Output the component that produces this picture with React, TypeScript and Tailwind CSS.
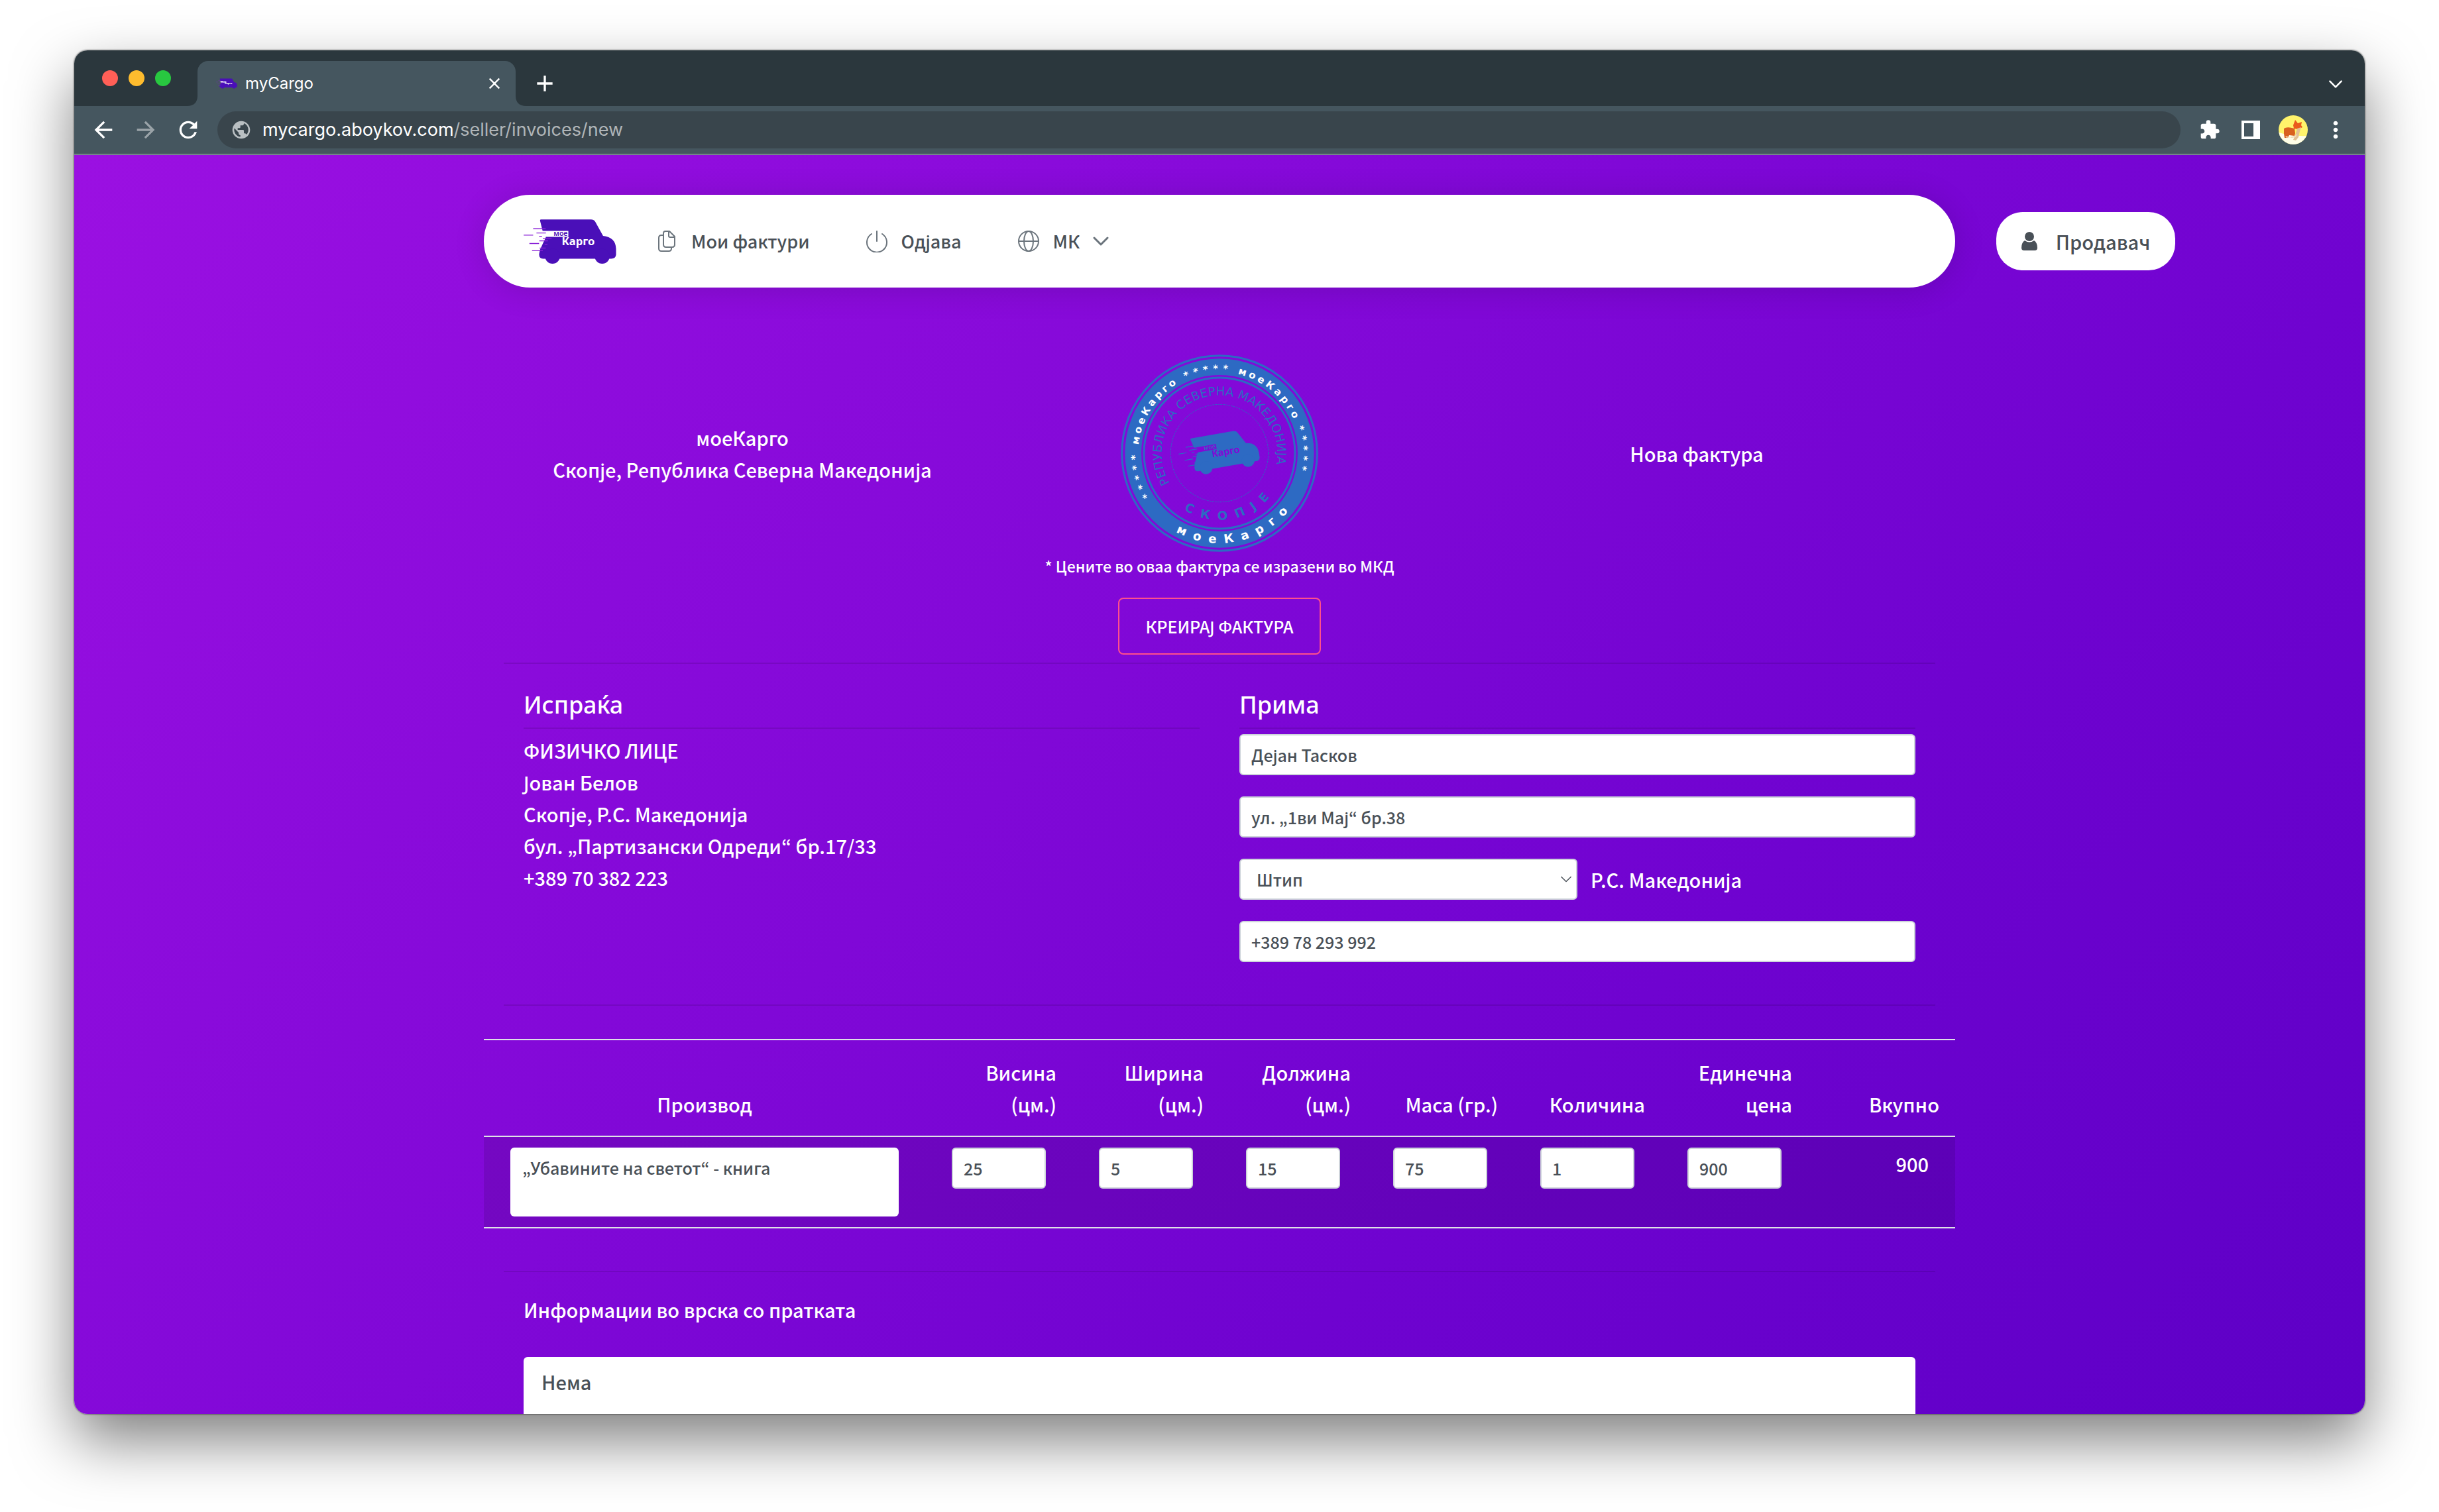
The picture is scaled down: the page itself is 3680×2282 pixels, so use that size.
import React from "react";
import { MdAdd, MdArrowBack, MdArrowForward, MdClose, MdExtension, MdMoreVert, MdPublic, MdRefresh } from "react-icons/md";

type TruckProps = { body: string; band: string; word: string; lines: string };

function TruckShape({ body, band, word, lines }: TruckProps) {
  return (
    <g>
      <g fill={body}>
        <path d="M108 72H336Q350 72 356 83L391 146Q448 152 450 205V232Q448 250 428 250H118Q100 250 100 230L104 210L131 152L116 124L105 80Q103 72 108 72Z" />
        <circle cx="161" cy="239" r="34" />
        <circle cx="387" cy="239" r="34" />
      </g>
      <path d="M114 124H233V151H122Z" fill={band} />
      <g stroke={lines} strokeWidth="4">
        <path d="M73 114H130M88 133H131M30 143H73M100 148H113M117 159H157M101 169H140M56 181H100M125 185H138M102 202H130M68 214H117" />
      </g>
      <text x="166" y="146" fontSize="32" fontWeight="600" fill={body} fontFamily="Noto Sans, sans-serif">мое</text>
      <text x="203" y="190" fontSize="50" fontWeight="700" fill={word} fontFamily="Noto Sans, sans-serif">Карго</text>
    </g>
  );
}

function Logo({ className }: { className: string }) {
  return (
    <svg viewBox="30 68 424 208" className={className} role="img" aria-label="моеКарго">
      <TruckShape body="#4a0fb8" band="#ffffff" word="#ffffff" lines="#8a22d8" />
    </svg>
  );
}

const BLUE = "#2d6ac3";

type ArcProps = { path: string; angle: number; size: number; weight: number; fill: string; spacing?: number; children: string };

function ArcText({ path, angle, size, weight, fill, spacing, children }: ArcProps) {
  return (
    <text fontSize={size} fontWeight={weight} fill={fill} letterSpacing={spacing} textAnchor="middle" fontFamily="DejaVu Sans, sans-serif">
      <textPath href={`#${path}`} startOffset={`${((180 + angle) / 360) * 100}%`}>{children}</textPath>
    </text>
  );
}

function Stamp() {
  return (
    <svg viewBox="0 0 900 900" className="size-[300px]" role="img" aria-label="Печат моеКарго">
      <defs>
        <path id="band-top" d="M450 818A368 368 0 0 1 450 82A368 368 0 0 1 450 818" />
        <path id="band-bottom" d="M450 43A407 407 0 0 0 450 857A407 407 0 0 0 450 43" />
        <path id="inner-top" d="M450 712A262 262 0 0 1 450 188A262 262 0 0 1 450 712" />
        <path id="inner-bottom" d="M450 148A302 302 0 0 0 450 752A302 302 0 0 0 450 148" />
      </defs>
      <g fill="none" stroke={BLUE}>
        <circle cx="450" cy="450" r="442" strokeWidth="9" />
        <circle cx="450" cy="450" r="391" strokeWidth="74" />
        <circle cx="450" cy="450" r="342" strokeWidth="9" />
        <circle cx="450" cy="450" r="221" strokeWidth="3" strokeDasharray="8 4" />
      </g>
      <ArcText path="band-top" angle={-105} size={45} weight={700} fill="#fff" spacing={20}>*****</ArcText>
      <ArcText path="band-top" angle={-57} size={45} weight={700} fill="#fff" spacing={12}>моеКарго</ArcText>
      <ArcText path="band-top" angle={-8} size={45} weight={700} fill="#fff" spacing={20}>*****</ArcText>
      <ArcText path="band-top" angle={40} size={45} weight={700} fill="#fff" spacing={12}>моеКарго</ArcText>
      <ArcText path="band-top" angle={88} size={45} weight={700} fill="#fff" spacing={20}>*****</ArcText>
      <ArcText path="band-bottom" angle={13} size={55} weight={700} fill="#fff" spacing={36}>моеКарго</ArcText>
      <ArcText path="inner-top" angle={-10} size={55} weight={400} fill={BLUE}>РЕПУБЛИКА СЕВЕРНА МАКЕДОНИЈА</ArcText>
      <ArcText path="inner-bottom" angle={12} size={55} weight={700} fill={BLUE} spacing={38}>СКОПЈЕ</ArcText>
      <g transform="translate(219 338) rotate(-9.8) scale(0.855)">
        <TruckShape body={BLUE} band="#8208d6" word="#8208d6" lines={BLUE} />
      </g>
    </svg>
  );
}

function FilesIcon() {
  return (
    <svg viewBox="0 0 26 34" className="h-[34px] w-[26px]" fill="none" stroke="#6c757d" strokeWidth="2" strokeLinejoin="round">
      <path d="M11 2H17L25 10V22Q25 26 21 26H12Q8 26 8 22V5Q8 2 11 2Z" />
      <path d="M16 2V9Q16 11 18 11H25M8 8H5Q1 8 1 12V28Q1 32 5 32H16Q20 32 20 28V26" />
    </svg>
  );
}

function PowerIcon() {
  return (
    <svg viewBox="0 0 34 34" className="size-[34px]" fill="none" stroke="#6c757d" strokeWidth="2" strokeLinecap="round">
      <path d="M17 2V17M9 6A15 15 0 1 0 25 6" />
    </svg>
  );
}

function GlobeIcon() {
  return (
    <svg viewBox="0 0 34 34" className="size-[34px]" fill="none" stroke="#6c757d" strokeWidth="2">
      <circle cx="17" cy="17" r="15" />
      <ellipse cx="17" cy="17" rx="7" ry="15" />
      <path d="M2 17H32" />
    </svg>
  );
}

function PersonIcon() {
  return (
    <svg viewBox="0 0 24 28" className="h-[28px] w-[24px]" fill="#495057">
      <ellipse cx="12" cy="7" rx="7" ry="7" />
      <path d="M5 13Q12 18 19 13Q24 16 24 24Q24 28 20 28H4Q0 28 0 24Q0 16 5 13Z" />
    </svg>
  );
}

function Avatar() {
  return (
    <svg viewBox="0 0 44 44" className="size-11 rounded-full">
      <rect width="44" height="44" fill="#fff36b" />
      <path d="M0 26Q20 32 44 31V44H0Z" fill="#fffde8" />
      <path d="M8 20Q12 17 20 19L24 20L25 27L24 31L16 30L14 34H9L8 28Z" fill="#d9601f" />
      <path d="M22 15L25 7L29 12L35 10L34 15L36 18L30 21L23 20Z" fill="#ea5a1c" />
      <path d="M28 20L34 18L32 24L30 33L26 38L22 37L25 30Z" fill="#e3c093" />
      <path d="M10 31L12 34L22 32L28 28L26 33L20 34Z" fill="#efd9b5" />
    </svg>
  );
}

function Chevron({ className }: { className: string }) {
  return (
    <svg viewBox="0 0 24 14" className={className} fill="none" stroke="currentColor" strokeLinecap="round" strokeLinejoin="round">
      <path d="M2 2L12 12L22 2" />
    </svg>
  );
}

function BrowserChrome() {
  return (
    <header className="shrink-0 font-['Inter',sans-serif] text-white">
      <div className="flex h-21 items-end bg-[#2b373d] pr-8">
        <div className="flex h-21 w-[186px] items-center gap-4 pl-[42px]">
          <button aria-label="Затвори прозорец" className="size-6 rounded-full bg-[#ff5f57]" />
          <button aria-label="Минимизирај" className="size-6 rounded-full bg-[#febc2e]" />
          <button aria-label="Зголеми" className="size-6 rounded-full bg-[#28c840]" />
        </div>
        <div className="relative flex h-[68px] w-[480px] items-center rounded-t-2xl bg-[#45565f] pr-[18px] pl-7">
          <svg viewBox="0 0 16 16" className="absolute bottom-0 -left-4 size-4" fill="#45565f"><path d="M16 0V16H0Q16 16 16 0Z" /></svg>
          <svg viewBox="0 0 16 16" className="absolute -right-4 bottom-0 size-4" fill="#45565f"><path d="M0 0V16H16Q0 16 0 0Z" /></svg>
          <Logo className="h-4 w-8" />
          <span className="ml-3 flex-1 text-[24px]">myCargo</span>
          <button aria-label="Затвори картичка"><MdClose className="size-7" /></button>
        </div>
        <button aria-label="Нова картичка" className="ml-6 flex h-[68px] items-center"><MdAdd className="size-10" /></button>
        <button aria-label="Картички" className="mb-[27px] ml-auto"><Chevron className="h-3 w-6 stroke-3" /></button>
      </div>
      <div className="flex h-[74px] items-center border-b-2 border-[#74848a] bg-[#45565f] pr-6">
        <div className="flex w-[216px] items-center gap-6 pl-6">
          <button aria-label="Назад"><MdArrowBack className="size-10" /></button>
          <button aria-label="Напред" className="text-[#9aa3a8]"><MdArrowForward className="size-10" /></button>
          <button aria-label="Освежи"><MdRefresh className="size-10" /></button>
        </div>
        <div className="flex h-14 flex-1 items-center gap-4 rounded-full bg-[#39454c] pl-5 text-[27px]">
          <MdPublic className="size-8 text-[#b9bfc2]" />
          <span>mycargo.aboykov.com<span className="text-[#b0b5b8]">/seller/invoices/new</span></span>
        </div>
        <div className="ml-7 flex items-center">
          <button aria-label="Додатоци"><MdExtension className="size-8" /></button>
          <button aria-label="Странична лента" className="ml-8">
            <span className="block h-7 w-7 border-4 border-r-10 border-white" />
          </button>
          <button aria-label="Профил" className="ml-7"><Avatar /></button>
          <button aria-label="Мени" className="ml-[22px]"><MdMoreVert className="size-10" /></button>
        </div>
      </div>
    </header>
  );
}

function NavBar() {
  return (
    <div className="mt-15 grid grid-cols-[minmax(0,1fr)_minmax(0,2220px)_minmax(0,1fr)] items-center text-[#495057]">
      <nav className="col-start-2 flex h-[140px] items-center rounded-full bg-white pl-15 text-[27px] shadow-[0_4px_48px_rgba(0,0,0,0.14)]">
        <a href="#home"><Logo className="h-[69px] w-[141px]" /></a>
        <a href="#invoices" className="ml-[62px] flex items-center gap-6"><FilesIcon />Мои фактури</a>
        <a href="#logout" className="ml-[84px] flex items-center gap-5"><PowerIcon />Одјава</a>
        <button className="ml-[84px] flex items-center gap-5"><GlobeIcon />МК<Chevron className="h-[14px] w-6 stroke-3 text-[#6c757d]" /></button>
      </nav>
      <a href="#seller" className="ml-[62px] flex h-22 w-[270px] items-center justify-center gap-7 rounded-[40px] bg-white">
        <PersonIcon />Продавач
      </a>
    </div>
  );
}

const FIELD = "h-[62px] rounded-md border-2 border-[#ced4da] bg-white pl-4 text-[25px] text-[#495057]";
const HEADING = "mt-[38px] font-['Noto_Sans',sans-serif] text-[36px]";

function Parties() {
  return (
    <div className="mx-[30px] grid grid-cols-2 gap-15 px-[30px]">
      <section>
        <h2 className={HEADING}>Испраќа</h2>
        <hr className="mt-[10px] border-t-2 border-black/10" />
        <address className="mt-2 not-italic">
          <p>ФИЗИЧКО ЛИЦЕ</p>
          <p>Јован Белов</p>
          <p>Скопје, Р.С. Македонија</p>
          <p>бул. „Партизански Одреди“ бр.17/33</p>
          <p>+389 70 382 223</p>
        </address>
      </section>
      <section>
        <h2 className={HEADING}>Прима</h2>
        <hr className="mt-[10px] border-t-2 border-black/10" />
        <div className="mt-2 flex flex-col gap-8">
          <input aria-label="Име и презиме" defaultValue="Дејан Тасков" className={FIELD} />
          <input aria-label="Адреса" defaultValue="ул. „1ви Мај“ бр.38" className={FIELD} />
          <div className="flex items-center gap-5">
            <div className="relative w-1/2">
              <select aria-label="Град" className="block h-[62px] w-full appearance-none rounded-md border-2 border-[#ced4da] bg-white pl-6 text-[25px] text-[#495057]">
                <option>Штип</option>
              </select>
              <Chevron className="pointer-events-none absolute top-[26px] right-2 h-[10px] w-[18px] stroke-2 text-[#495057]" />
            </div>
            <span>Р.С. Македонија</span>
          </div>
          <input aria-label="Телефон" defaultValue="+389 78 293 992" className={FIELD} />
        </div>
      </section>
    </div>
  );
}

const COLUMNS = [
  { head: "Висина (цм.)", value: "25" },
  { head: "Ширина (цм.)", value: "5" },
  { head: "Должина (цм.)", value: "15" },
  { head: "Маса (гр.)", value: "75" },
  { head: "Количина", value: "1" },
  { head: "Единечна цена", value: "900" },
];

function ItemsTable() {
  return (
    <table className="mt-[50px] w-full table-fixed border-collapse">
      <thead>
        <tr className="border-y-2 border-[#dee2e6] align-bottom">
          <th className="w-[30%] p-6 font-medium">Производ</th>
          {COLUMNS.map((c) => (
            <th key={c.head} className="w-[10%] py-6 pr-6 pl-12 text-right font-medium [&:nth-child(5)]:pl-0 [&:nth-child(6)]:pl-0">{c.head}</th>
          ))}
          <th className="w-[10%] py-6 pr-6 text-right font-medium">Вкупно</th>
        </tr>
      </thead>
      <tbody>
        <tr className="border-b-2 border-[#dee2e6] bg-black/10 align-top">
          <td className="px-10 py-4">
            <textarea aria-label="Производ" defaultValue="„Убавините на светот“ - книга" className="block h-[104px] w-full resize-none rounded-md bg-white px-[18px] py-[6px] text-[25px] text-[#495057]" />
          </td>
          {COLUMNS.map((c) => (
            <td key={c.head} className="px-10 py-4">
              <input aria-label={c.head} defaultValue={c.value} className="block h-[62px] w-full rounded-md border-2 border-[#ced4da] bg-white pl-4 text-[25px] text-[#495057]" />
            </td>
          ))}
          <td className="px-10 py-4 text-right">900</td>
        </tr>
      </tbody>
    </table>
  );
}

export default function App() {
  return (
    <div className="flex h-screen flex-col bg-white px-28 pt-19 pb-37">
      <div className="flex min-h-0 flex-1 flex-col overflow-hidden rounded-[20px] shadow-[0_0_2px_1px_rgba(0,0,0,0.4),0_40px_90px_rgba(0,0,0,0.5)]">
        <BrowserChrome />
        <main className="flex min-h-0 flex-1 flex-col bg-linear-[135deg,#9b10e2,#8008d7_44%,#6f03d0_68%,#5d00c6] font-['Noto_Sans_CJK_KR','Noto_Sans',sans-serif] text-[29px] leading-[48px] font-medium text-white">
          <NavBar />
          <div className="mx-auto mt-[100px] flex min-h-0 w-full max-w-[2220px] flex-1 flex-col">
            <div className="mx-[30px] grid grid-cols-3 items-center text-center">
              <div>
                <p>моеКарго</p>
                <p>Скопје, Република Северна Македонија</p>
              </div>
              <div className="flex justify-center"><Stamp /></div>
              <p>Нова фактура</p>
            </div>
            <p className="text-center text-[23px] leading-10">* Цените во оваа фактура се изразени во МКД</p>
            <button className="mt-7 h-[86px] self-center rounded-lg border-2 border-[#ff4f8b] px-10 text-[25px]">КРЕИРАЈ ФАКТУРА</button>
            <hr className="mx-[30px] mt-3 border-t-2 border-black/10" />
            <Parties />
            <hr className="mx-[30px] mt-16 border-t-2 border-black/10" />
            <ItemsTable />
            <hr className="mx-[30px] mt-16 border-t-2 border-black/10" />
            <label htmlFor="info" className="mx-15 mt-8">Информации во врска со пратката</label>
            <textarea id="info" defaultValue="Нема" className="mx-15 mt-12 min-h-0 flex-1 resize-none rounded-t-md bg-white px-[27px] pt-[13px] text-[#495057]" />
          </div>
        </main>
      </div>
    </div>
  );
}
